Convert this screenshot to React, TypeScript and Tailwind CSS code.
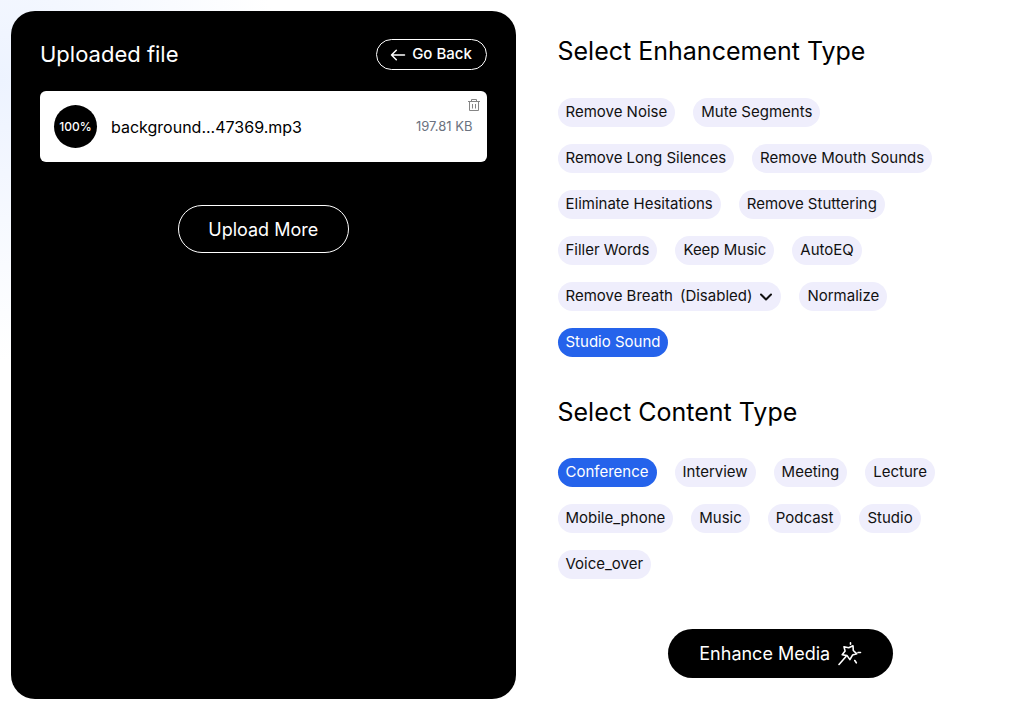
import React, { useState } from "react";

const enhancementTypes = [
  "Remove Noise",
  "Mute Segments",
  "Remove Long Silences",
  "Remove Mouth Sounds",
  "Eliminate Hesitations",
  "Remove Stuttering",
  "Filler Words",
  "Keep Music",
  "AutoEQ",
  "Remove Breath",
  "Normalize",
  "Studio Sound",
];

const contentTypes = [
  "Conference",
  "Interview",
  "Meeting",
  "Lecture",
  "Mobile_phone",
  "Music",
  "Podcast",
  "Studio",
  "Voice_over",
];

const pill = "h-[29px] rounded-full px-2 text-[15px] cursor-pointer";

function Pill({
  label,
  active,
  onClick,
}: {
  label: string;
  active: boolean;
  onClick: () => void;
}) {
  return (
    <button
      type="button"
      aria-pressed={active}
      onClick={onClick}
      className={`${pill} ${
        active ? "bg-[#2563eb] text-white" : "bg-[#efeefc] text-[#111111]"
      }`}
    >
      {label}
    </button>
  );
}

function TrashIcon() {
  return (
    <svg width="14" height="14" viewBox="0 0 14 14" fill="none" stroke="#858585">
      <path d="M1 3.500h12M4.500 3.500v-2h5v2M2.500 3.500v9h9v-9M5.500 6v4.500M8.500 6v4.500" />
    </svg>
  );
}

function ArrowIcon() {
  return (
    <svg
      width="16"
      height="12"
      viewBox="0 0 16 12"
      fill="none"
      stroke="currentColor"
      strokeWidth="1.500"
      strokeLinecap="round"
      strokeLinejoin="round"
    >
      <path d="M14.500 6H1.500M6.300 1.200L1.500 6l4.800 4.800" />
    </svg>
  );
}

function WandIcon() {
  return (
    <svg
      width="24"
      height="24"
      viewBox="0 0 24 24"
      fill="none"
      stroke="currentColor"
      strokeWidth="1.600"
      strokeLinecap="round"
      strokeLinejoin="round"
    >
      <path d="M6 4.800l4.700 1L15 3.800l.3 4.700 3.500 3.300-4.300 1.300-2.600 4.500-2.800-4-4.900-.8 2.900-3.700z" />
      <path d="M8 14.500L1 22.500M12.500.9v1.300M20 10.500h2.500M16.800 18.500l1.500 2.300" />
    </svg>
  );
}

function ChevronIcon() {
  return (
    <svg
      width="14"
      height="10"
      viewBox="0 0 14 10"
      fill="none"
      stroke="#111111"
      strokeWidth="2"
      strokeLinecap="round"
      strokeLinejoin="round"
      className="pointer-events-none"
    >
      <path d="M2 2.500l5 5 5-5" />
    </svg>
  );
}

function App() {
  const [enhancements, setEnhancements] = useState<string[]>(["Studio Sound"]);
  const [content, setContent] = useState("Conference");
  const [breath, setBreath] = useState("(Disabled)");

  const toggleEnhancement = (name: string) => {
    if (enhancements.includes(name)) {
      setEnhancements(enhancements.filter((e) => e !== name));
    } else {
      setEnhancements([...enhancements, name]);
    }
  };

  return (
    <main className="grid min-h-screen grid-cols-2 bg-white bg-[radial-gradient(circle_at_0px_80px,#edf3ff_0px,#ffffff_280px)] pt-[11px] pr-1 pb-[10px] pl-[11px] font-['Inter','Liberation_Sans',sans-serif] text-black">
      <section className="rounded-3xl bg-black px-[29px] pt-7 text-white">
        <div className="flex h-[31px] items-center justify-between">
          <h2 className="text-[22px]">Uploaded file</h2>
          <button
            type="button"
            className="flex h-[31px] w-[111px] cursor-pointer items-center justify-center gap-1.5 rounded-full border border-white text-[15px] font-medium"
          >
            <ArrowIcon />
            Go Back
          </button>
        </div>

        <div className="relative mt-[21px] flex h-[71px] items-center rounded-md bg-white px-[14px] text-black">
          <span className="flex size-[43px] items-center justify-center rounded-full bg-black text-[12px] font-medium text-white">
            100%
          </span>
          <span className="ml-[14px] text-[16px]">background...47369.mp3</span>
          <span className="ml-auto text-[13px] text-[#6b7280]">197.81 KB</span>
          <button
            type="button"
            aria-label="Delete file"
            className="absolute top-[7px] right-1.5 cursor-pointer"
          >
            <TrashIcon />
          </button>
        </div>

        <button
          type="button"
          className="mx-auto mt-[43px] block h-12 w-[171px] cursor-pointer rounded-full border border-white text-[18px]"
        >
          Upload More
        </button>
      </section>

      <section className="pt-5 pr-4 pl-[42px]">
        <h1 className="text-[25px] leading-10">Select Enhancement Type</h1>
        <div className="mt-[27px] flex flex-wrap gap-x-[18px] gap-y-[17px] pr-6">
          {enhancementTypes.map((name) =>
            name === "Remove Breath" ? (
              <div
                key={name}
                className={`${pill} flex items-center bg-[#efeefc] text-[#111111]`}
              >
                <label htmlFor="breath">{name}</label>
                <select
                  id="breath"
                  value={breath}
                  onChange={(e) => setBreath(e.target.value)}
                  className="field-sizing-content ml-[7px] cursor-pointer appearance-none bg-transparent"
                >
                  <option>(Disabled)</option>
                  <option>(Enabled)</option>
                </select>
                <span className="ml-[7px]">
                  <ChevronIcon />
                </span>
              </div>
            ) : (
              <Pill
                key={name}
                label={name}
                active={enhancements.includes(name)}
                onClick={() => toggleEnhancement(name)}
              />
            )
          )}
        </div>

        <h1 className="mt-[35px] text-[25px] leading-10">Select Content Type</h1>
        <div className="mt-[26px] flex flex-wrap gap-x-[18px] gap-y-[17px] pr-6">
          {contentTypes.map((name) => (
            <Pill
              key={name}
              label={name}
              active={content === name}
              onClick={() => setContent(name)}
            />
          ))}
        </div>

        <button
          type="button"
          className="mx-auto mt-[50px] flex h-[49px] w-[225px] cursor-pointer items-center justify-center gap-2 rounded-full bg-black text-[18px] text-white"
        >
          Enhance Media
          <WandIcon />
        </button>
      </section>
    </main>
  );
}

export default App;
